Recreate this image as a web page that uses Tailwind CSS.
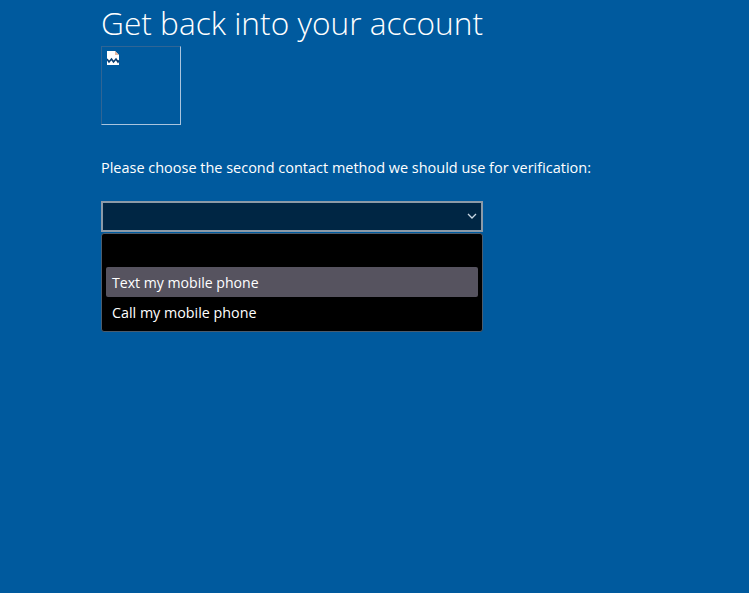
<!doctype html>
<html lang="en">
<head>
    <meta charset="UTF-8">
    <meta name="viewport" content="width=device-width, initial-scale=1.0">
    <script src="https://cdn.jsdelivr.net/npm/@tailwindcss/browser@4"></script>
    <title>Get back into your account</title>
</head>
<body>
    <div class="h-screen overflow-hidden bg-[#005a9e] pl-[101px] font-['Open_Sans',sans-serif] text-white">
        <div class="w-[382px]">
            <h1 class="h-[46px] pt-[1px] text-[31.65px] leading-[44px] font-light whitespace-nowrap">Get back into your account</h1>
            <div class="h-[79px] w-[80px] border border-t-[#2f6595] border-l-[#2f6595] border-r-[#a9c4de] border-b-[#a9c4de] pt-[4px] pl-[5px]">
                <svg class="block" width="13" height="15" viewBox="0 0 13 15">
                    <path d="M0 0h8l4 4v10H0z" fill="#fff"/>
                    <path d="M8 0v4h4z" fill="#e8b9a0"/>
                    <path d="M0 8l2 3 2.500-3 2 3 2.500-3 2 3 1-1.500" fill="none" stroke="#0a3f73" stroke-width="1.600"/>
                </svg>
            </div>
            <p class="mt-[33px] text-[14.47px] leading-[20px] font-medium whitespace-nowrap">Please choose the second contact method we should use for verification:</p>
            <div class="mt-[23px] flex h-[31px] items-center justify-end border-2 border-[#8b9aa8] bg-[#002644] pr-[4px]">
                <svg width="10" height="7" viewBox="0 0 10 7" fill="none" stroke="#c8d6e2" stroke-width="1.3">
                    <path d="M1 1l4 4 4-4"/>
                </svg>
            </div>
            <div class="mt-[1px] h-[99px] rounded-[3px] border border-[#4a5c6e] bg-black px-[4px] pt-[33px] text-[14.1px] leading-[31px]">
                <div class="h-[30px] rounded-[2px] bg-[#56535f] pl-[6px] whitespace-nowrap">Text my mobile phone</div>
                <div class="h-[30px] pl-[6px] text-[14.3px] whitespace-nowrap">Call my mobile phone</div>
            </div>
        </div>
    </div>
</body>
</html>
